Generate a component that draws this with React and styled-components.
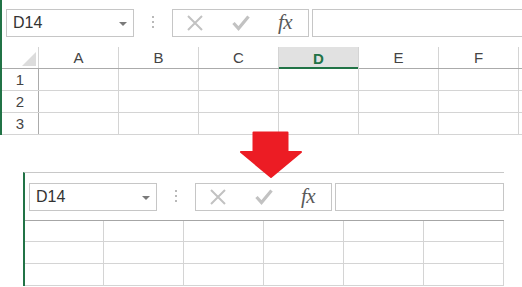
import React from 'react'
import styled, { createGlobalStyle } from 'styled-components'

const GREEN = '#217346'
const COLUMNS = ['A', 'B', 'C', 'D', 'E', 'F']
const ACTIVE_COLUMN = 'D'

const GlobalStyle = createGlobalStyle`
  html, body {
    margin: 0;
    padding: 0;
    background: #ffffff;
    overflow: hidden;
  }
  body {
    font-family: "Liberation Sans", Arial, sans-serif;
    color: #333333;
  }
`

const Stage = styled.div`
  position: relative;
  width: 522px;
  height: 287px;
  overflow: hidden;
`

const SheetWindow = styled.div`
  box-sizing: border-box;
  width: ${p => (p.$width ? `${p.$width}px` : 'auto')};
  margin: ${p => p.$margin};
  border-left: 2px solid ${GREEN};
  border-top: 1px solid #c8c8c8;
  background: #ffffff;
  overflow: hidden;
`

const Toolbar = styled.div`
  display: flex;
  align-items: center;
  height: ${p => (p.$headings ? '48px' : '48px')};
  padding: 0 0 0 4px;
  box-sizing: border-box;
  border-bottom: ${p => (p.$headings ? 'none' : '1px solid #a6a6a6')};
  align-items: flex-start;
  padding-top: 10px;
`

const NameBox = styled.div`
  box-sizing: border-box;
  width: 128px;
  height: 28px;
  flex: none;
  display: flex;
  align-items: center;
  justify-content: space-between;
  padding: 0 6px 0 6px;
  border: 1px solid #c6c6c6;
  font-size: 16px;
  color: #333333;
`

const DropCaret = styled.span`
  width: 0;
  height: 0;
  border-left: 4px solid transparent;
  border-right: 4px solid transparent;
  border-top: 4px solid #7a7a7a;
  margin-top: 2px;
`

const Grip = styled.div`
  flex: none;
  width: 38px;
  display: flex;
  flex-direction: column;
  align-items: center;
  gap: 3px;
  padding-top: 7px;

  span {
    width: 2px;
    height: 2px;
    background: #b9b9b9;
  }
`

const ButtonGroup = styled.div`
  box-sizing: border-box;
  flex: none;
  width: 137px;
  height: 28px;
  display: flex;
  align-items: center;
  border: 1px solid #c6c6c6;
`

const IconSlot = styled.div`
  width: ${p => p.$w}px;
  display: flex;
  justify-content: center;
  align-items: center;
`

const FxLabel = styled.span`
  font-family: "Liberation Serif", "Times New Roman", serif;
  font-style: italic;
  font-size: 21px;
  color: #5a5a5a;
  letter-spacing: -0.5px;
  line-height: 1;
  margin-top: -1px;
`

const FormulaInput = styled.div`
  box-sizing: border-box;
  flex: 1;
  min-width: 0;
  height: 28px;
  margin-left: 3px;
  border: 1px solid #c6c6c6;
  border-right: ${p => (p.$open ? 'none' : '1px solid #c6c6c6')};
`

const HeaderRow = styled.div`
  display: flex;
  height: 22px;
  box-sizing: border-box;
  border-bottom: 1px solid #ababab;
`

const Corner = styled.div`
  position: relative;
  box-sizing: border-box;
  width: 37px;
  flex: none;
  border-right: 1px solid #d4d4d4;

  &::after {
    content: '';
    position: absolute;
    right: 2px;
    bottom: 2px;
    width: 0;
    height: 0;
    border-left: 14px solid transparent;
    border-bottom: 14px solid #dcdcdc;
  }
`

const ColHeader = styled.div`
  box-sizing: border-box;
  width: 80px;
  flex: none;
  display: flex;
  align-items: center;
  justify-content: center;
  font-size: 15px;
  border-right: 1px solid #d4d4d4;
  color: ${p => (p.$active ? GREEN : '#444444')};
  font-weight: ${p => (p.$active ? 'bold' : 'normal')};
  background: ${p => (p.$active ? '#e1e1e1' : 'transparent')};
  box-shadow: ${p => (p.$active ? `inset 0 -2px 0 ${GREEN}` : 'none')};
  margin-bottom: ${p => (p.$active ? '-1px' : '0')};
`

const Row = styled.div`
  display: flex;
  height: 22px;
  box-sizing: border-box;
  border-bottom: 1px solid #d4d4d4;

  &:first-child {
    height: ${p => (p.$headings ? '22px' : '21px')};
  }
`

const RowHeader = styled.div`
  box-sizing: border-box;
  width: 37px;
  flex: none;
  display: flex;
  align-items: center;
  justify-content: center;
  font-size: 15px;
  color: #444444;
  border-right: 1px solid #ababab;
`

const Cell = styled.div`
  box-sizing: border-box;
  width: 80px;
  flex: none;
  border-right: 1px solid #d4d4d4;

  &:first-child {
    width: ${p => (p.$trim ? '79px' : '80px')};
  }
`

const ArrowMark = styled.svg`
  position: absolute;
  left: 239px;
  top: 131px;
`

function CancelIcon() {
  return (
    <svg width="18" height="18" viewBox="0 0 18 18">
      <path d="M2 2 L16 16 M16 2 L2 16" stroke="#c2c2c2" strokeWidth="2" fill="none" />
    </svg>
  )
}

function EnterIcon() {
  return (
    <svg width="18" height="16" viewBox="0 0 18 16">
      <path d="M1.5 8 L6.5 13.5 L16.5 1.5" stroke="#c2c2c2" strokeWidth="3.2" fill="none" />
    </svg>
  )
}

function FormulaBar({ headings }) {
  return (
    <Toolbar $headings={headings}>
      <NameBox>
        D14
        <DropCaret />
      </NameBox>
      <Grip>
        <span />
        <span />
        <span />
      </Grip>
      <ButtonGroup>
        <IconSlot $w={44}>
          <CancelIcon />
        </IconSlot>
        <IconSlot $w={48}>
          <EnterIcon />
        </IconSlot>
        <IconSlot $w={40}>
          <FxLabel>fx</FxLabel>
        </IconSlot>
      </ButtonGroup>
      <FormulaInput $open={headings} />
    </Toolbar>
  )
}

function Sheet({ headings, rows, width, margin }) {
  return (
    <SheetWindow $width={width} $margin={margin}>
      <FormulaBar headings={headings} />
      {headings && (
        <HeaderRow>
          <Corner />
          {COLUMNS.map(c => (
            <ColHeader key={c} $active={c === ACTIVE_COLUMN}>
              {c}
            </ColHeader>
          ))}
        </HeaderRow>
      )}
      <div>
        {rows.map(r => (
          <Row key={r} $headings={headings}>
            {headings && <RowHeader>{r}</RowHeader>}
            {COLUMNS.map(c => (
              <Cell key={c} $trim={!headings} />
            ))}
          </Row>
        ))}
      </div>
    </SheetWindow>
  )
}

export default function App() {
  return (
    <Stage>
      <GlobalStyle />
      <Sheet headings rows={[1, 2, 3]} margin="-2px 0 0 0" width={560} />
      <Sheet rows={[1, 2, 3]} margin="37px 0 0 23px" width={481} />
      <ArrowMark width="64" height="48" viewBox="0 0 64 48">
        <path
          d="M14.5 1.5 H48.5 V21 H62 L32 46 L2 21 H14.5 Z"
          fill="#ec1c24"
          stroke="#ec1c24"
          strokeWidth="2"
          strokeLinejoin="round"
        />
      </ArrowMark>
    </Stage>
  )
}
